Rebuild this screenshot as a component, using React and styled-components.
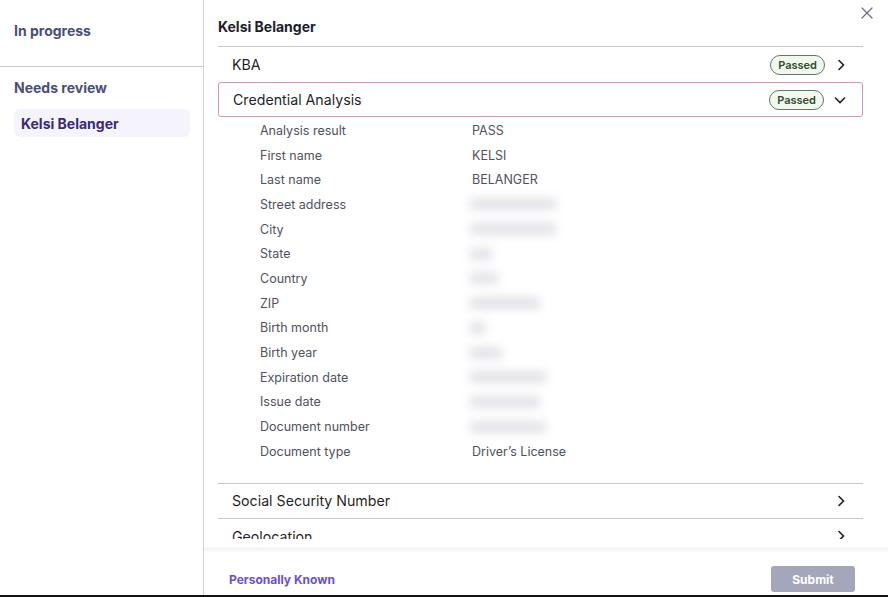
import React from 'react';
import styled, { createGlobalStyle } from 'styled-components';

const GlobalStyle = createGlobalStyle`
    html, body {
        margin: 0;
        padding: 0;
        background: #fff;
    }
    body {
        font-family: Inter, "Liberation Sans", sans-serif;
    }
`;

const Shell = styled.div`
    width: 888px;
    height: 595px;
    display: flex;
    border-bottom: 2px solid #111;
    overflow: hidden;
`;

const Sidebar = styled.aside`
    width: 203px;
    flex-shrink: 0;
    border-right: 1px solid #d2d3da;
    display: flex;
    flex-direction: column;
`;

const SideSection = styled.div`
    padding: ${(p) => p.$pad};
    border-bottom: ${(p) => (p.$divider ? '1px solid #c9cbd4' : 'none')};
`;

const SideHeading = styled.div`
    font-size: 14px;
    font-weight: 700;
    color: #4a4e7a;
    line-height: 18px;
`;

const SideItem = styled.div`
    margin-top: 12px;
    width: 176px;
    height: 28px;
    box-sizing: border-box;
    padding-left: 7px;
    display: flex;
    align-items: center;
    border-radius: 6px;
    background: #f5f3fc;
    font-size: 14px;
    font-weight: 700;
    color: #3b2a78;
`;

const Main = styled.main`
    flex: 1;
    display: flex;
    flex-direction: column;
    position: relative;
    min-width: 0;
`;

const Scroll = styled.div`
    height: 539px;
    overflow: hidden;
    padding: 0 25px 0 14px;
`;

const Title = styled.h2`
    margin: 0;
    padding: 18px 0 10px;
    font-size: 14px;
    line-height: 18px;
    font-weight: 700;
    color: #1d1d2b;
    border-bottom: 1px solid #c4c6d0;
`;

const Close = styled.button`
    position: absolute;
    top: 4px;
    right: 12px;
    border: none;
    background: none;
    padding: 2px;
    cursor: pointer;
    display: flex;
`;

const Row = styled.div`
    height: 35px;
    box-sizing: border-box;
    display: flex;
    align-items: center;
    padding: 0 14px 0 14px;
    border: ${(p) => (p.$open ? '1px solid #e68db2' : 'none')};
    border-bottom: ${(p) => (p.$open ? '1px solid #e68db2' : p.$line ? '1px solid #c4c6d0' : 'none')};
    border-radius: ${(p) => (p.$open ? '3px' : '0')};
    font-size: 14.2px;
    color: #1f1f2a;
    gap: 8px;
`;

const RowLabel = styled.span`
    flex: 1;
`;

const Badge = styled.span`
    height: 20px;
    box-sizing: border-box;
    padding: 0 7px;
    border: 1px solid #5d7b5c;
    border-radius: 10px;
    background: #f2f7ef;
    color: #2e4b2e;
    font-size: 11px;
    font-weight: 600;
    display: flex;
    align-items: center;
`;

const Details = styled.div`
    padding: 1px 0 19px 42px;
    border-bottom: 1px solid #c4c6d0;
`;

const DetailRow = styled.div`
    display: grid;
    grid-template-columns: 212px 1fr;
    height: 24.7px;
    align-items: center;
    font-size: 12.5px;
    color: #50515e;
`;

const Blur = styled.span`
    display: block;
    height: 12px;
    background: #e3e3e9;
    filter: blur(5px);
    margin-left: -2px;
`;

const Footer = styled.footer`
    height: 56px;
    box-sizing: border-box;
    display: flex;
    align-items: center;
    justify-content: space-between;
    padding: 24px 33px 0 25px;
    background: linear-gradient(#fff 0, #fff 8px, #f2f2f5 9px, #fff 14px, #fff 100%);
`;

const LinkButton = styled.a`
    font-size: 12px;
    font-weight: 700;
    color: #6a4fd4;
    cursor: pointer;
`;

const Submit = styled.button`
    width: 84px;
    height: 26px;
    border: none;
    border-radius: 3px;
    background: #a4a7bc;
    color: #fff;
    font-family: inherit;
    font-size: 12px;
    font-weight: 700;
`;

const ChevronRight = () => (
    <svg width="16" height="16" viewBox="0 0 16 16" fill="none" stroke="#1f1f2a" strokeWidth="1.6" strokeLinecap="round">
        <path d="M6 3.5 10.5 8 6 12.5" />
    </svg>
);

const ChevronDown = () => (
    <svg width="16" height="16" viewBox="0 0 16 16" fill="none" stroke="#1f1f2a" strokeWidth="1.6" strokeLinecap="round">
        <path d="M3.5 6 8 10.5 12.5 6" />
    </svg>
);

const details = [
    ['Analysis result', 'PASS'],
    ['First name', 'KELSI'],
    ['Last name', 'BELANGER'],
    ['Street address', 86],
    ['City', 86],
    ['State', 22],
    ['Country', 28],
    ['ZIP', 70],
    ['Birth month', 16],
    ['Birth year', 32],
    ['Expiration date', 76],
    ['Issue date', 70],
    ['Document number', 76],
    ['Document type', 'Driver\u2019s License'],
];

const App = () => {
    return (
        <>
            <GlobalStyle />
            <Shell>
                <Sidebar>
                    <SideSection $pad="22px 14px 26px" $divider>
                        <SideHeading>In progress</SideHeading>
                    </SideSection>
                    <SideSection $pad="12px 14px">
                        <SideHeading>Needs review</SideHeading>
                        <SideItem>Kelsi Belanger</SideItem>
                    </SideSection>
                </Sidebar>
                <Main>
                    <Close aria-label="Close">
                        <svg width="14" height="14" viewBox="0 0 14 14" stroke="#6b6c7a" strokeWidth="1.2" strokeLinecap="round">
                            <path d="M2 2 12 12M12 2 2 12" />
                        </svg>
                    </Close>
                    <Scroll>
                        <Title>Kelsi Belanger</Title>
                        <Row>
                            <RowLabel>KBA</RowLabel>
                            <Badge>Passed</Badge>
                            <ChevronRight />
                        </Row>
                        <Row $open>
                            <RowLabel>Credential Analysis</RowLabel>
                            <Badge>Passed</Badge>
                            <ChevronDown />
                        </Row>
                        <Details>
                            {details.map(([label, value]) => (
                                <DetailRow key={label}>
                                    <span>{label}</span>
                                    {typeof value === 'number' ? (
                                        <Blur style={{ width: value }} />
                                    ) : (
                                        <span>{value}</span>
                                    )}
                                </DetailRow>
                            ))}
                        </Details>
                        <Row $line>
                            <RowLabel>Social Security Number</RowLabel>
                            <ChevronRight />
                        </Row>
                        <Row>
                            <RowLabel>Geolocation</RowLabel>
                            <ChevronRight />
                        </Row>
                    </Scroll>
                    <Footer>
                        <LinkButton>Personally Known</LinkButton>
                        <Submit>Submit</Submit>
                    </Footer>
                </Main>
            </Shell>
        </>
    );
};

export default App;
